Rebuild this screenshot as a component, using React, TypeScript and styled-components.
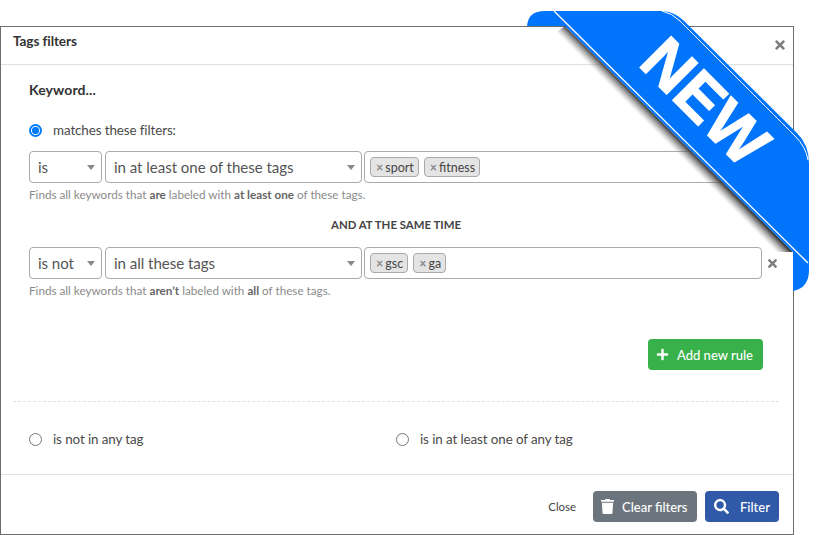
import React from 'react';
import styled, { createGlobalStyle } from 'styled-components';
import { FaPlus, FaSearch, FaTimes, FaTrash } from 'react-icons/fa';

const GlobalStyle = createGlobalStyle`
  html, body {
    margin: 0;
    padding: 0;
    background: #fff;
  }
  body {
    font-family: 'Lato', 'Noto Sans', sans-serif;
    color: #333;
    width: 828px;
    height: 535px;
    overflow: hidden;
  }
`;

type RuleProps = {
  verb: string;
  match: string;
  tags: string[];
  hint: React.ReactNode;
};

const Rule: React.FC<RuleProps> = ({ verb, match, tags, hint }) => (
  <RuleBlock>
    <RuleRow>
      <SelectBox $width={73}>
        {verb}
        <Caret />
      </SelectBox>
      <SelectBox $width={257}>
        {match}
        <Caret />
      </SelectBox>
      <TagsBox>
        {tags.map((tag) => (
          <Tag key={tag}>
            <TagRemove>×</TagRemove>
            {tag}
          </Tag>
        ))}
      </TagsBox>
      <RemoveRule>
        <FaTimes />
      </RemoveRule>
    </RuleRow>
    <Hint>{hint}</Hint>
  </RuleBlock>
);

const Ribbon = () => (
  <RibbonSvg viewBox="520 0 300 300">
    <defs>
      <linearGradient id="fold" gradientUnits="userSpaceOnUse" x1="679" y1="139" x2="671" y2="147">
        <stop offset="0" stopColor="#333" stopOpacity="1" />
        <stop offset="1" stopColor="#999" stopOpacity="0" />
      </linearGradient>
    </defs>
    <polygon points="565,26 793,252 776,252 552,35" fill="url(#fold)" />
    <path
      d="M527 26 Q528 11 545 11 L663 11 Q675 12 684 21 L797 133 Q809 145 809 163 L809 270 Q809 288 793 291 L793 252 L565 26 Z"
      fill="#0074fb"
    />
    <path d="M554 11 L808 263" stroke="#fff" strokeWidth="1.3" fill="none" />
    <path d="M662 11 Q672 13 680 21 L795 136 Q806 147 808 160" stroke="#fff" strokeWidth="1" fill="none" />
    <RibbonText x="0" y="0" transform="translate(706 101) rotate(45)" textAnchor="middle" dy="23">
      NEW
    </RibbonText>
  </RibbonSvg>
);

export default function App() {
  return (
    <Page>
      <GlobalStyle />
      <Modal>
        <Header>
          <Title>Tags filters</Title>
          <CloseIcon>
            <FaTimes />
          </CloseIcon>
        </Header>
        <Body>
          <Keyword>Keyword...</Keyword>
          <RadioRow>
            <Radio $checked />
            <RadioLabel>matches these filters:</RadioLabel>
          </RadioRow>
          <Rule
            verb="is"
            match="in at least one of these tags"
            tags={['sport', 'fitness']}
            hint={
              <>
                Finds all keywords that <b>are</b> labeled with <b>at least one</b> of these tags.
              </>
            }
          />
          <Joiner>AND AT THE SAME TIME</Joiner>
          <Rule
            verb="is not"
            match="in all these tags"
            tags={['gsc', 'ga']}
            hint={
              <>
                Finds all keywords that <b>aren’t</b> labeled with <b>all</b> of these tags.
              </>
            }
          />
          <AddRow>
            <AddButton>
              <FaPlus />
              Add new rule
            </AddButton>
          </AddRow>
          <Divider />
          <OptionsRow>
            <Option>
              <Radio />
              <RadioLabel>is not in any tag</RadioLabel>
            </Option>
            <Option>
              <Radio />
              <RadioLabel>is in at least one of any tag</RadioLabel>
            </Option>
          </OptionsRow>
        </Body>
        <Footer>
          <CloseLink>Close</CloseLink>
          <FooterButton $color="#6c757d" $width={104} $pad={7} $gap={7}>
            <FaTrash />
            Clear filters
          </FooterButton>
          <FooterButton $color="#3059a8" $width={74} $pad={9} $gap={11}>
            <FaSearch />
            Filter
          </FooterButton>
        </Footer>
      </Modal>
      <Ribbon />
    </Page>
  );
}

const Page = styled.div`
  position: relative;
  width: 828px;
  height: 535px;
  padding-top: 26px;
  box-sizing: border-box;
`;

const Modal = styled.div`
  width: 794px;
  height: 509px;
  box-sizing: border-box;
  border: 1px solid #6e6e6e;
  display: flex;
  flex-direction: column;
  background: #fff;
`;

const Header = styled.div`
  height: 37px;
  flex: none;
  display: flex;
  align-items: center;
  justify-content: space-between;
  padding: 0 6px 0 12px;
  border-bottom: 1px solid #dee2e6;
`;

const Title = styled.div`
  font-size: 13.6px;
  font-weight: 700;
  color: #333;
  letter-spacing: -0.1px;
  margin-top: -10px;
`;

const CloseIcon = styled.div`
  display: flex;
  font-size: 14px;
  color: #7d7d7d;
  margin-top: -2px;
`;

const Body = styled.div`
  flex: 1;
  display: flex;
  flex-direction: column;
  padding: 0 14px 0 12px;
`;

const Keyword = styled.div`
  margin: 16px 0 0 16px;
  height: 17px;
  line-height: 17px;
  font-size: 14px;
  font-weight: 700;
  letter-spacing: 0.1px;
  color: #333;
`;

const RadioRow = styled.div`
  display: flex;
  align-items: center;
  gap: 11px;
  margin: 22px 0 0 16px;
  height: 20px;
`;

const Radio = styled.span<{ $checked?: boolean }>`
  width: 13px;
  height: 13px;
  box-sizing: border-box;
  flex: none;
  border-radius: 50%;
  border: ${(p) => (p.$checked ? '2px solid #007bff' : '1px solid #777')};
  background: ${(p) => (p.$checked ? 'radial-gradient(circle, #007bff 0 3.4px, #fff 3.9px)' : '#fff')};
`;

const RadioLabel = styled.span`
  font-size: 13.4px;
  color: #4a4a4a;
  letter-spacing: -0.1px;
`;

const RuleBlock = styled.div`
  margin-left: 16px;
`;

const RuleRow = styled.div`
  display: flex;
  align-items: center;
  gap: 3px;
  margin-top: 11px;
`;

const SelectBox = styled.div<{ $width: number }>`
  position: relative;
  width: ${(p) => p.$width}px;
  height: 32px;
  flex: none;
  box-sizing: border-box;
  border: 1px solid #aaa;
  border-radius: 4px;
  padding-left: 8px;
  line-height: 30px;
  font-size: 15.1px;
  color: #555;
  letter-spacing: -0.05px;
`;

const Caret = styled.span`
  position: absolute;
  right: 6px;
  top: 13px;
  border-left: 4px solid transparent;
  border-right: 4px solid transparent;
  border-top: 5px solid #888;
`;

const TagsBox = styled.div`
  width: 398px;
  height: 32px;
  flex: none;
  margin-left: -1px;
  box-sizing: border-box;
  border: 1px solid #aaa;
  border-radius: 4px;
  display: flex;
  align-items: center;
  gap: 5px;
  padding-left: 5px;
`;

const Tag = styled.span`
  height: 20px;
  box-sizing: border-box;
  padding: 0 4px 0 5px;
  border: 1px solid #aaa;
  border-radius: 4px;
  background: #e4e4e4;
  display: flex;
  align-items: center;
  font-size: 12.5px;
  color: #444;
`;

const TagRemove = styled.span`
  color: #8a8a8a;
  font-weight: 700;
  margin-right: 2px;
`;

const RemoveRule = styled.span`
  display: flex;
  flex: none;
  margin-left: 1px;
  font-size: 13px;
  color: #7d7d7d;
`;

const Hint = styled.div`
  margin-top: 3px;
  height: 16px;
  line-height: 16px;
  font-size: 11.7px;
  color: #8b8b8b;

  b {
    color: #666;
    font-weight: 700;
  }
`;

const Joiner = styled.div`
  margin: 15px 0 3px;
  height: 16px;
  line-height: 16px;
  text-align: center;
  font-size: 11.4px;
  font-weight: 700;
  color: #444;
`;

const AddRow = styled.div`
  display: flex;
  justify-content: flex-end;
  margin-top: 41px;
  padding-right: 16px;
`;

const AddButton = styled.div`
  width: 115px;
  height: 31px;
  box-sizing: border-box;
  border-radius: 4px;
  background: #38b14a;
  color: #fff;
  font-size: 13px;
  font-weight: 500;
  display: flex;
  align-items: center;
  gap: 8px;
  padding-left: 8px;

  svg {
    font-size: 13px;
  }
`;

const Divider = styled.div`
  margin-top: 31px;
  border-top: 1px dashed #e1e1e1;
`;

const OptionsRow = styled.div`
  display: grid;
  grid-template-columns: 367px 1fr;
  margin: 27px 0 0 16px;
`;

const Option = styled.div`
  display: flex;
  align-items: center;
  gap: 11px;
  height: 20px;
`;

const Footer = styled.div`
  height: 60px;
  flex: none;
  box-sizing: border-box;
  border-top: 1px solid #dee2e6;
  display: flex;
  align-items: center;
  justify-content: flex-end;
  gap: 8px;
  padding: 4px 14px 0 0;
`;

const CloseLink = styled.span`
  margin-right: 9px;
  font-size: 11.4px;
  color: #444;
`;

const FooterButton = styled.div<{ $color: string; $width: number; $pad: number; $gap: number }>`
  width: ${(p) => p.$width}px;
  height: 31px;
  box-sizing: border-box;
  border-radius: 4px;
  background: ${(p) => p.$color};
  color: #fff;
  font-size: 13px;
  font-weight: 500;
  display: flex;
  align-items: center;
  gap: ${(p) => p.$gap}px;
  padding-left: ${(p) => p.$pad}px;

  svg {
    font-size: 15px;
    flex: none;
  }
`;

const RibbonSvg = styled.svg`
  position: absolute;
  left: 520px;
  top: 0;
  width: 300px;
  height: 300px;
`;

const RibbonText = styled.text`
  font-family: 'Liberation Sans', Arial, sans-serif;
  font-size: 64px;
  font-weight: 700;
  fill: #fff;
  stroke: #fff;
  stroke-width: 1.2px;
`;
